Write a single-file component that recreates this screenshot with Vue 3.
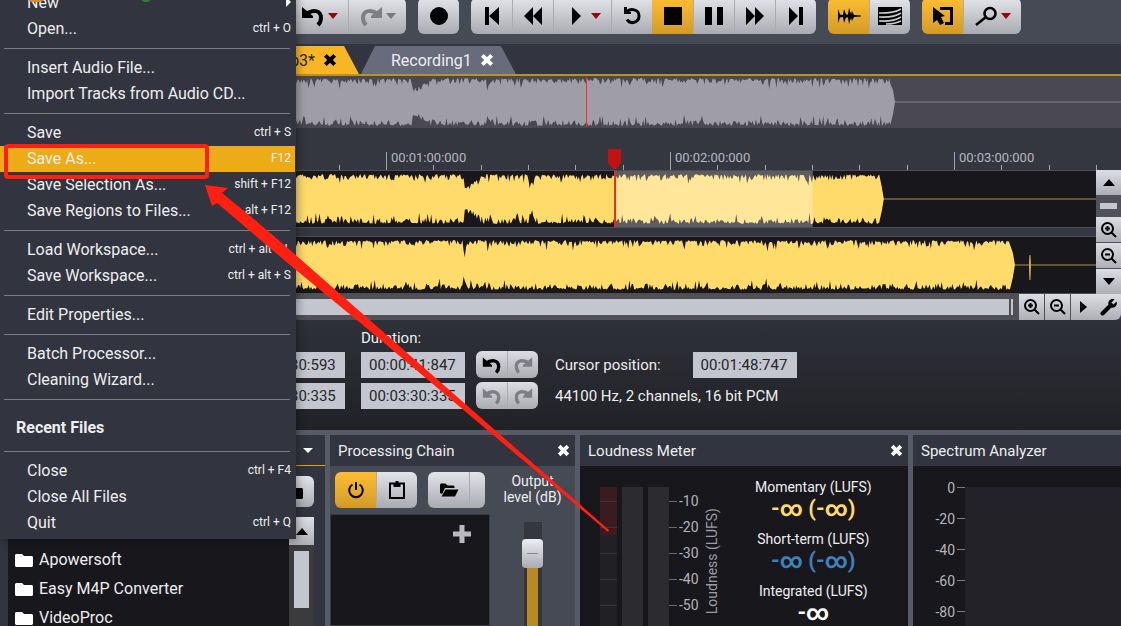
<template>
  <div class="app">
    <header class="toolbar">
      <div v-for="(group, g) in toolbar" :key="g" class="group">
        <button
          v-for="b in group"
          :key="b.name"
          type="button"
          class="tool"
          :class="{ 'tool--on': b.on, 'tool--wide': b.caret, 'tool--off': b.off }"
          :aria-label="b.name"
        >
          <svg class="icon" viewBox="0 0 24 24" width="24" height="24">
            <path v-if="icons[b.icon].fill" :d="icons[b.icon].fill" fill="currentColor" />
            <path v-if="icons[b.icon].line" :d="icons[b.icon].line" fill="none" stroke="currentColor"
              :stroke-width="icons[b.icon].w || 3" />
            <path v-if="icons[b.icon].light" :d="icons[b.icon].light" fill="none" stroke="#c9cbd0" stroke-width="1.6" />
          </svg>
          <span v-if="b.caret" class="caret" :class="{ 'caret--red': !b.off }"></span>
        </button>
      </div>
    </header>

    <div class="tabs">
      <div class="tab tab--active">
        <button type="button" class="tab__name">p3*</button>
        <button type="button" class="close" aria-label="Close tab">
          <svg viewBox="0 0 12 12" width="14" height="14"><path d="M2 2L10 10M10 2L2 10" stroke="currentColor" stroke-width="3.4" /></svg>
        </button>
      </div>
      <div class="tab">
        <button type="button" class="tab__name">Recording1</button>
        <button type="button" class="close" aria-label="Close tab">
          <svg viewBox="0 0 12 12" width="14" height="14"><path d="M2 2L10 10M10 2L2 10" stroke="currentColor" stroke-width="3.4" /></svg>
        </button>
      </div>
    </div>

    <svg class="overview" viewBox="0 0 1121 52" preserveAspectRatio="none">
      <path d="M890 26H1121" stroke="#66656e" stroke-width="2" />
      <path :d="overviewWave" fill="#9f9ea7" />
      <path d="M586.5 1V51" stroke="#ff2a2a" stroke-width="1" />
    </svg>

    <div class="editor">
      <div class="ruler">
        <div v-for="t in rulerMarks" :key="t" class="ruler__minute">
          <span class="ruler__major">{{ t }}</span>
          <i v-for="n in 5" :key="n" class="ruler__minor"></i>
        </div>
        <svg class="playhead" viewBox="0 0 13 21" width="13" height="21">
          <path d="M0 0H13V14L8 20H5L0 14Z" fill="#c41112" />
        </svg>
      </div>

      <div class="tracks">
        <svg class="track" viewBox="0 0 1095 56" preserveAspectRatio="none">
          <path d="M880 28H1095" stroke="#a88f4a" stroke-width="1" />
          <path :d="firstWave" fill="#ffdb6c" />
          <rect x="615" y="0" width="197" height="56" fill="#fff" opacity="0.3" />
          <path d="M614.5 0V56" stroke="#e22f1c" stroke-width="2" />
        </svg>
        <svg class="track" viewBox="0 0 1095 56" preserveAspectRatio="none">
          <path d="M1012 28H1095" stroke="#a88f4a" stroke-width="1" />
          <path :d="secondWave" fill="#ffdb6c" />
          <path d="M1029 18L1029.500 28L1029 43L1028.500 28Z" fill="#ffdb6c" stroke="#c9ad58" stroke-width="1" />
        </svg>
      </div>

      <div class="vscroll">
        <button type="button" class="mini" aria-label="Scroll up"><span class="up"></span></button>
        <div class="vscroll__track"></div>
        <button type="button" class="mini" aria-label="Zoom in vertically">
          <svg viewBox="0 0 18 18" width="18" height="18"><path :d="magnifier + 'M5 7.500H10M7.500 5V10'" class="stroke" /></svg>
        </button>
        <button type="button" class="mini" aria-label="Zoom out vertically">
          <svg viewBox="0 0 18 18" width="18" height="18"><path :d="magnifier + 'M5 7.500H10'" class="stroke" /></svg>
        </button>
        <button type="button" class="mini" aria-label="Scroll down"><span class="up up--down"></span></button>
      </div>

      <div class="hscroll">
        <div class="hscroll__track"><div class="hscroll__thumb"></div><div class="hscroll__grip"></div></div>
        <button type="button" class="mini" aria-label="Zoom in">
          <svg viewBox="0 0 18 18" width="18" height="18"><path :d="magnifier + 'M5 7.500H10M7.500 5V10'" class="stroke" /></svg>
        </button>
        <button type="button" class="mini" aria-label="Zoom out">
          <svg viewBox="0 0 18 18" width="18" height="18"><path :d="magnifier + 'M5 7.500H10'" class="stroke" /></svg>
        </button>
        <button type="button" class="mini" aria-label="Scroll right"><span class="right"></span></button>
      </div>
      <button type="button" class="mini mini--corner" aria-label="View settings">
        <svg viewBox="0 0 18 18" width="18" height="18">
          <path d="M2.500 15.500L9.500 8.500" stroke="currentColor" stroke-width="4" stroke-linecap="round" />
          <path d="M14.500 1.500L11.500 4.500L13.500 6.500L16.500 3.500C18 7 15 10.500 11 9.500L8.500 7C7.500 3 11 0 14.500 1.500Z" fill="currentColor" />
        </svg>
      </button>
    </div>

    <section class="info">
      <label for="duration" class="info__label">Duration:</label>
      <input class="time info__end" value="00:02:30:593" aria-label="Selection end" />
      <input id="duration" class="time" value="00:00:41:847" />
      <div class="history">
        <button type="button" class="history__btn" aria-label="Undo selection">
          <svg viewBox="0 0 24 24" width="20" height="20"><path :d="icons.undo.fill" fill="currentColor" /><path :d="icons.undo.line" fill="none" stroke="currentColor" stroke-width="4" /></svg>
        </button>
        <button type="button" class="history__btn history__btn--off" aria-label="Redo selection">
          <svg viewBox="0 0 24 24" width="20" height="20"><path :d="icons.redo.fill" fill="currentColor" /><path :d="icons.redo.line" fill="none" stroke="currentColor" stroke-width="4" /></svg>
        </button>
      </div>
      <div class="cursor">
        <label for="cursor">Cursor position:</label>
        <input id="cursor" class="time" value="00:01:48:747" />
      </div>
      <input class="time info__end" value="00:03:30:335" aria-label="View end" />
      <input class="time" value="00:03:30:335" aria-label="View duration" />
      <div class="history">
        <button type="button" class="history__btn history__btn--off" aria-label="Undo view">
          <svg viewBox="0 0 24 24" width="20" height="20"><path :d="icons.undo.fill" fill="currentColor" /><path :d="icons.undo.line" fill="none" stroke="currentColor" stroke-width="4" /></svg>
        </button>
        <button type="button" class="history__btn history__btn--off" aria-label="Redo view">
          <svg viewBox="0 0 24 24" width="20" height="20"><path :d="icons.redo.fill" fill="currentColor" /><path :d="icons.redo.line" fill="none" stroke="currentColor" stroke-width="4" /></svg>
        </button>
      </div>
      <p class="format">44100 Hz, 2 channels, 16 bit PCM</p>
    </section>

    <main class="dock">
      <section class="panel panel--files">
        <div class="panel__head panel__head--gold">
          <button type="button" class="close" aria-label="Panel menu"><span class="up up--down up--white"></span></button>
        </div>
        <div class="files__bar">
          <button type="button" class="tool tool--solo" aria-label="Folder">
            <svg viewBox="0 0 18 14" width="18" height="14"><path :d="folder" fill="#000" /></svg>
          </button>
        </div>
        <div class="files">
          <ul class="files__list">
            <li v-for="f in folders" :key="f">
              <svg viewBox="0 0 18 14" width="18" height="14"><path :d="folder" fill="#fff" /></svg>
              {{ f }}
            </li>
          </ul>
          <div class="files__scroll">
            <button type="button" class="mini mini--tall" aria-label="Scroll list up"><span class="up"></span></button>
            <div class="files__thumb"></div>
          </div>
        </div>
      </section>

      <section class="panel">
        <div class="panel__head">
          <h2>Processing Chain</h2>
          <button type="button" class="close" aria-label="Close Processing Chain">
            <svg viewBox="0 0 12 12" width="13" height="13"><path d="M2 2L10 10M10 2L2 10" stroke="currentColor" stroke-width="3.4" /></svg>
          </button>
        </div>
        <div class="chain">
          <div class="chain__left">
            <div class="chain__tools">
              <div class="group">
                <button type="button" class="tool tool--on" aria-label="Power">
                  <svg viewBox="0 0 18 18" width="18" height="18"><path d="M5.500 3.500A6.800 6.800 0 1 0 12.500 3.500M9 1V9" class="stroke" /></svg>
                </button>
                <button type="button" class="tool" aria-label="Clipboard">
                  <svg viewBox="0 0 18 20" width="18" height="20"><path d="M2 3.500H16V18H2Z" class="stroke" /><path d="M5.500 3H7.500V1H10.500V3H12.500V7H5.500Z" fill="#000" /></svg>
                </button>
              </div>
              <div class="group">
                <button type="button" class="tool" aria-label="Open preset">
                  <svg viewBox="0 0 20 16" width="20" height="16"><path d="M1 11V2.500L2 1.500H6.500L8.500 3.500H14.500L15.500 4.500V6H6L3 12ZM6.500 7.500H19.500L16 14.500H2.500Z" fill="#000" /></svg>
                </button>
                <button type="button" class="tool tool--slim" aria-label="Preset list"></button>
              </div>
            </div>
            <div class="chain__list">
              <button type="button" class="plus" aria-label="Add effect">
                <svg viewBox="0 0 18 18" width="18" height="18"><path d="M9 0V18M0 9H18" stroke="#b8bac0" stroke-width="5" /></svg>
              </button>
            </div>
          </div>
          <div class="chain__level">
            <label for="level">Output<br />level (dB)</label>
            <input id="level" v-model="level" type="range" min="0" max="100" class="slider" />
          </div>
        </div>
      </section>

      <section class="panel">
        <div class="panel__head">
          <h2>Loudness Meter</h2>
          <button type="button" class="close" aria-label="Close Loudness Meter">
            <svg viewBox="0 0 12 12" width="13" height="13"><path d="M2 2L10 10M10 2L2 10" stroke="currentColor" stroke-width="3.4" /></svg>
          </button>
        </div>
        <div class="meter">
          <div class="meter__bar meter__bar--scale"></div>
          <div class="meter__bar"></div>
          <div class="meter__bar"></div>
          <ol class="meter__scale">
            <li v-for="n in 5" :key="n">{{ -10 * n }}</li>
          </ol>
          <div class="meter__title">Loudness (LUFS)</div>
          <dl class="readout">
            <div v-for="r in readouts" :key="r.label">
              <dt>{{ r.label }}</dt>
              <dd :class="'readout--' + r.tone">{{ r.value }}</dd>
            </div>
          </dl>
        </div>
      </section>

      <section class="panel">
        <div class="panel__head"><h2>Spectrum Analyzer</h2></div>
        <div class="spectrum">
          <ol class="spectrum__scale">
            <li v-for="n in 5" :key="n">{{ n === 1 ? '0' : -20 * (n - 1) }}</li>
          </ol>
          <div class="spectrum__plot"></div>
        </div>
      </section>
    </main>

    <nav class="menu">
      <template v-for="(m, i) in menu" :key="i">
        <hr v-if="m === '-'" class="menu__sep" />
        <div v-else-if="m.title" class="menu__title">{{ m.title }}</div>
        <button v-else type="button" class="menu__item" :class="{ 'menu__item--active': m.active }">
          <span>{{ m.name }}</span>
          <kbd v-if="m.key">{{ m.key }}</kbd>
          <span v-if="m.sub" class="right right--white"></span>
        </button>
      </template>
    </nav>

    <div class="mark"></div>
    <svg class="arrow" viewBox="0 0 620 540" width="620" height="540">
      <ellipse cx="36" cy="0" rx="7" ry="2" fill="#d98a2b" />
      <ellipse cx="146" cy="0" rx="4" ry="2" fill="#2f7d32" />
      <path d="M205 185L228 188L222 193L255 220L290 250L381 330L609 530L608 532L370 331L290 265L217 203L212 206Z" fill="#ff2012" />
    </svg>
  </div>
</template>

<script setup>
import { ref } from 'vue'

const level = ref(87)

const menu = [
  { name: 'New', sub: true },
  { name: 'Open...', key: 'ctrl + O' },
  '-',
  { name: 'Insert Audio File...' },
  { name: 'Import Tracks from Audio CD...' },
  '-',
  { name: 'Save', key: 'ctrl + S' },
  { name: 'Save As...', key: 'F12', active: true },
  { name: 'Save Selection As...', key: 'shift + F12' },
  { name: 'Save Regions to Files...', key: 'alt + F12' },
  '-',
  { name: 'Load Workspace...', key: 'ctrl + alt + L' },
  { name: 'Save Workspace...', key: 'ctrl + alt + S' },
  '-',
  { name: 'Edit Properties...' },
  '-',
  { name: 'Batch Processor...' },
  { name: 'Cleaning Wizard...' },
  '-',
  { title: 'Recent Files' },
  '-',
  { name: 'Close', key: 'ctrl + F4' },
  { name: 'Close All Files' },
  { name: 'Quit', key: 'ctrl + Q' },
]

const icons = {
  undo: { fill: 'M1 3L12 12V14H1Z', line: 'M5 10C11 5 20 6 20 14C20 17 19 19 17 21', w: 4 },
  redo: { fill: 'M23 3L12 12V14H23Z', line: 'M19 10C13 5 4 6 4 14C4 17 5 19 7 21', w: 4 },
  record: { fill: 'M12 3A9 9 0 1 1 12 21A9 9 0 1 1 12 3Z' },
  start: { fill: 'M5 3H9V21H5ZM19 3V21L9 12Z' },
  rewind: { fill: 'M12 3V21L3 12ZM21 3V21L12 12Z' },
  play: { fill: 'M8 3L17 12L8 21Z' },
  loop: { fill: 'M4 3V10H11V8H7V3Z', line: 'M7 8C10 4 19 5 19 12A6.500 6.500 0 0 1 7 15.500' },
  stop: { fill: 'M3 3H21V21H3Z' },
  pause: { fill: 'M3 3H10V21H3ZM15 3H21V21H15Z' },
  forward: { fill: 'M3 3L12 12L3 21ZM12 3L21 12L12 21Z' },
  end: { fill: 'M5 3L14 12L5 21ZM15 3H19V21H15Z' },
  wave: { fill: 'M1 5L3 10.500L6 11L7 5L9 10.500H11L12 4L14 10L15 7L17 11L24 11.500V12.500L17 13L15 17L14 14L12 20L11 13.500H9L7 19L6 13L3 13.500L1 19Z' },
  spectral: { fill: 'M0 3H24V21H0Z', light: 'M1 9C9 9 17 9 23 5M1 13C9 13.500 17 13 23 9M1 17C9 17.500 17 17 23 13M8 20C14 20 19 19 23 17' },
  select: { fill: 'M2 3L14 12L10 13L13 19L9 21L6 16L2 19Z', line: 'M9 4.500H20.500V19.500H14' },
  zoom: { line: 'M16 4A5.500 5.500 0 1 1 16 15A5.500 5.500 0 1 1 16 4ZM12 13L2 21', w: 2.6 },
}

const toolbar = [
  [
    { name: 'Undo', icon: 'undo', caret: true },
    { name: 'Redo', icon: 'redo', caret: true, off: true },
  ],
  [{ name: 'Record', icon: 'record' }],
  [
    { name: 'Go to start', icon: 'start' },
    { name: 'Rewind', icon: 'rewind' },
    { name: 'Play', icon: 'play', caret: true },
    { name: 'Loop', icon: 'loop' },
    { name: 'Stop', icon: 'stop', on: true },
    { name: 'Pause', icon: 'pause' },
    { name: 'Fast forward', icon: 'forward' },
    { name: 'Go to end', icon: 'end' },
  ],
  [
    { name: 'Waveform view', icon: 'wave', on: true },
    { name: 'Spectral view', icon: 'spectral' },
  ],
  [
    { name: 'Selection tool', icon: 'select', on: true },
    { name: 'Zoom tool', icon: 'zoom', caret: true },
  ],
]

const magnifier = 'M7.500 2A5.500 5.500 0 1 1 7.500 13A5.500 5.500 0 1 1 7.500 2ZM11.500 11.500L16 16'
const folder = 'M1 1H7L9 3H17L18 4V13L17 14H1L0 13V2Z'

const rulerMarks = ['00:00:00:000', '00:01:00:000', '00:02:00:000', '00:03:00:000']
const folders = ['Apowersoft', 'Easy M4P Converter', 'VideoProc']

const readouts = [
  { label: 'Momentary (LUFS)', value: '-∞ (-∞)', tone: 'yellow' },
  { label: 'Short-term (LUFS)', value: '-∞ (-∞)', tone: 'blue' },
  { label: 'Integrated (LUFS)', value: '-∞', tone: 'white' },
]

// outline of a loud, compressed recording; dips are [x, width, depth]
function wave(seed, end, mid, amp, dips) {
  let s = seed
  const rnd = () => {
    s = (s * 16807) % 2147483647
    return s / 2147483647
  }
  const edge = (x) => {
    let h = amp - rnd() * 2
    const r = rnd()
    if (r > 0.93) h -= 4 + rnd() * 6
    else if (r > 0.45) h -= rnd() * 5
    for (const [dx, w, depth] of dips) {
      if (x >= dx && x < dx + w) h -= depth * (1 - (x - dx) / (w * 1.3))
    }
    return h
  }
  const top = []
  const bottom = []
  for (let x = 0; x < end - 4; x += 1.2) {
    top.push(`${x.toFixed(1)} ${(mid - edge(x)).toFixed(1)}`)
    bottom.unshift(`${x.toFixed(1)} ${(mid + edge(x)).toFixed(1)}`)
  }
  return `M${top.join('L')}L${end - 2} ${mid - 12}L${end} ${mid}L${end - 2} ${mid + 12}L${bottom.join('L')}Z`
}

const overviewWave = wave(71, 895, 26, 24, [[412, 18, 10], [487, 5, 9]])
const firstWave = wave(1234, 883, 28, 25, [[464, 15, 13], [528, 7, 11]])
const secondWave = wave(987, 1014, 28, 25, [[462, 5, 12]])
</script>

<style>
body {
  background: #464a54;
}
</style>

<style scoped>
.app {
  position: relative;
  display: flex;
  flex-direction: column;
  height: 100vh;
  overflow: hidden;
  background: #343740;
  color: #eeeef0;
  font-family: Roboto, sans-serif;
  font-size: 15px;
}
button {
  padding: 0;
  border: 0;
  background: none;
  color: inherit;
  font: inherit;
}
.toolbar {
  display: flex;
  flex: none;
  align-items: flex-end;
  gap: 12px;
  height: 44px;
  box-sizing: border-box;
  padding: 0 0 10px 290px;
  background: #464a54;
}
.group {
  display: flex;
  border-radius: 6px;
  overflow: hidden;
}
.tool {
  display: flex;
  flex: none;
  align-items: center;
  justify-content: center;
  width: 41px;
  height: 36px;
  color: #000;
  background: linear-gradient(#e2e4e9, #a9abb1);
}
.tool + .tool {
  box-shadow: inset 1px 0 #a9abb0;
}
.tool--wide {
  width: 58px;
  gap: 3px;
}
.tool.tool--on {
  background: linear-gradient(#fdbd33, #d39b26);
  box-shadow: none;
}
.tool--off {
  color: #7d7f83;
}
.tool--slim {
  width: 16px;
}
.icon {
  flex: none;
}
.caret {
  border: 5px solid transparent;
  border-top: 6px solid #77797d;
  border-bottom: 0;
}
.caret--red {
  border-top-color: #9c0508;
}

.tabs {
  display: flex;
  flex: none;
  align-items: flex-end;
  gap: 2px;
  height: 32px;
  box-sizing: border-box;
  padding-left: 200px;
  border-bottom: 2px solid #bd8f28;
  background: #32353f;
}
.tab {
  display: flex;
  align-items: center;
  gap: 8px;
  height: 28px;
  padding: 0 22px 0 30px;
  background: #676b7c;
  clip-path: polygon(14px 0, calc(100% - 15px) 0, 100% 100%, 0 100%);
}
.tab__name {
  font-size: 16px;
}
.tab--active {
  width: 107px;
  justify-content: flex-end;
  background: #f9b624;
  color: #2a2312;
}
.tab--active .close {
  color: #000;
}
.close {
  display: flex;
  color: #fff;
}
.overview {
  flex: none;
  display: block;
  width: 100%;
  height: 52px;
  background: #4a4951;
}

.editor {
  flex: none;
  display: grid;
  grid-template-columns: 1fr 25px;
}
.ruler {
  position: relative;
  grid-column: 1 / 3;
  display: flex;
  height: 42px;
  padding-left: 102px;
  overflow: hidden;
}
.ruler__minute {
  flex: none;
  display: grid;
  grid-template-columns: repeat(6, minmax(0, 1fr));
  align-items: end;
  width: 284px;
}
.ruler__major {
  height: 18px;
  padding-left: 4px;
  border-left: 1px solid #a4a6ac;
  color: #b6b8be;
  font-size: 13px;
  line-height: 12px;
  white-space: nowrap;
}
.ruler__minor {
  height: 5px;
  border-left: 1px solid #a4a6ac;
}
.playhead {
  position: absolute;
  left: 608px;
  bottom: 0;
}
.tracks {
  display: flex;
  flex-direction: column;
  gap: 8px;
}
.track {
  display: block;
  width: 100%;
  height: 56px;
  border: solid #4c4c51;
  border-width: 1px 0;
  background: #18171c;
}
.vscroll {
  display: flex;
  flex-direction: column;
  gap: 1px;
  background: #515259;
}
.vscroll__track {
  flex: 1;
  margin: 7px 4px;
  background: #c3c6cf;
}
.mini {
  flex: none;
  display: flex;
  align-items: center;
  justify-content: center;
  width: 25px;
  height: 25px;
  color: #000;
  background: linear-gradient(#dcdee3, #adafb5);
}
.mini--corner {
  height: 26px;
  border-bottom-right-radius: 6px;
}
.mini--tall {
  height: 28px;
}
.stroke {
  fill: none;
  stroke: #000;
  stroke-width: 2;
}
.up {
  border: 6px solid transparent;
  border-top: 0;
  border-bottom: 7px solid #000;
}
.up--down {
  transform: rotate(180deg);
}
.up--white {
  border-width: 5px;
  border-top: 0;
  border-bottom-color: #fff;
}
.right {
  border: 6px solid transparent;
  border-left: 7px solid #000;
  border-right: 0;
}
.right--white {
  border-width: 5px;
  border-left-color: #fff;
  border-right: 0;
}
.hscroll {
  display: flex;
  gap: 1px;
  background: #515155;
}
.hscroll__track {
  flex: 1;
  display: flex;
  gap: 2px;
  padding: 5px;
}
.hscroll__thumb {
  flex: 1;
  background: #c3c6cf;
}
.hscroll__grip {
  width: 2px;
  background: #c3c6cf;
}
.hscroll .mini {
  height: 26px;
}

.info {
  flex: none;
  display: grid;
  grid-template-columns: 345px 104px 62px 1fr;
  grid-template-rows: 18px 27px 27px;
  align-items: center;
  column-gap: 16px;
  row-gap: 4px;
  padding: 9px 0 21px;
  background: linear-gradient(#2e3138, #212226);
}
.info__label {
  grid-column: 2 / -1;
}
.time {
  width: 104px;
  height: 26px;
  box-sizing: border-box;
  padding: 0 8px;
  border: 0;
  background: #c3c6cf;
  color: #25262a;
  font: inherit;
}
.info__end {
  grid-column: 1;
  justify-self: end;
}
.history {
  display: flex;
  height: 27px;
  margin-left: -5px;
  margin-right: 5px;
  border-radius: 6px;
  overflow: hidden;
}
.history__btn {
  flex: 1;
  display: flex;
  align-items: center;
  justify-content: center;
  color: #000;
  background: linear-gradient(#dcdee3, #aaacb2);
}
.history__btn + .history__btn {
  box-shadow: inset 1px 0 #a9abb0;
}
.history__btn--off {
  color: #7d7f83;
}
.cursor {
  display: flex;
  align-items: center;
  gap: 32px;
  margin-left: -4px;
}
.format {
  margin: 0 0 0 -4px;
}

.dock {
  flex: 1;
  display: grid;
  grid-template-columns: 325fr 245fr 328fr 208fr;
  gap: 5px;
  min-height: 0;
  padding-top: 5px;
  background: #575b67;
}
.panel {
  display: flex;
  flex-direction: column;
  min-width: 0;
  min-height: 0;
  overflow: hidden;
  background: #18171c;
}
.panel__head {
  flex: none;
  display: flex;
  align-items: center;
  justify-content: space-between;
  height: 31px;
  box-sizing: border-box;
  padding: 0 5px 0 8px;
  background: #32353f;
}
.panel__head h2 {
  margin: 0;
  font-size: 15px;
  font-weight: 400;
}
.panel__head--gold {
  justify-content: flex-end;
  padding-right: 12px;
  border-bottom: 1px solid #dda11f;
}
.panel--files {
  background: #32353f;
}
.files__bar {
  flex: none;
  display: flex;
  justify-content: flex-end;
  padding: 10px 11px;
}
.tool--solo {
  height: 31px;
  border-radius: 6px;
}
.files {
  flex: 1;
  display: flex;
  min-height: 0;
  padding: 0 11px 0 8px;
}
.files__list {
  flex: 1;
  margin: 0;
  padding: 28px 0 0;
  list-style: none;
  background: #18171c;
  font-size: 16px;
}
.files__list li {
  display: flex;
  align-items: center;
  gap: 6px;
  height: 29px;
  padding-left: 7px;
}
.files__scroll {
  display: flex;
  flex-direction: column;
  gap: 6px;
  background: #3b3a3d;
}
.files__thumb {
  height: 57px;
  margin: 0 5px;
  background: #c3c6cf;
}

.chain {
  flex: 1;
  display: flex;
  min-height: 0;
  background: #464a54;
}
.chain__left {
  display: flex;
  flex-direction: column;
  width: 160px;
}
.chain__tools {
  display: flex;
  gap: 11px;
  padding: 6px 0 6px 5px;
}
.chain__list {
  flex: 1;
  padding: 10px 18px;
  border: 1px solid #38393e;
  background: #18171c;
  text-align: right;
}
.chain__level {
  flex: 1;
  display: flex;
  flex-direction: column;
  align-items: center;
  gap: 17px;
  padding-top: 7px;
  font-size: 14px;
  line-height: 16px;
  text-align: center;
}
.slider {
  flex: none;
  width: 21px;
  height: 160px;
  margin: 0;
  appearance: none;
  writing-mode: vertical-lr;
  direction: rtl;
  background:
    linear-gradient(#b98a24, #b98a24) center 40px / 11px 100% no-repeat,
    linear-gradient(#343740, #343740) center / 18px 100% no-repeat;
}
.slider::-webkit-slider-thumb {
  appearance: none;
  width: 21px;
  height: 29px;
  border-radius: 4px;
  background:
    linear-gradient(#85878c, #85878c) center / 11px 1px no-repeat,
    linear-gradient(#eceef2, #a9abb0);
}

.meter {
  flex: 1;
  display: flex;
  min-height: 0;
  padding: 21px 3px 0 20px;
}
.meter__bar {
  flex: none;
  width: 21px;
  margin-right: 5px;
  background: #2c2b30;
}
.meter__bar--scale {
  width: 17px;
  background:
    repeating-linear-gradient(transparent 0 14px, #37363b 14px 15px, transparent 15px 26px),
    linear-gradient(#3a1b20 48px, #212025 48px);
}
.meter__scale {
  flex: none;
  margin: 1px 0 0 -5px;
  padding: 0;
  list-style: none;
  color: #b4b5ba;
  font-size: 14px;
}
.meter__scale li,
.spectrum__scale li {
  display: flex;
  align-items: center;
}
.meter__scale li {
  gap: 2px;
  height: 26px;
}
.meter__scale li::before {
  content: '';
  width: 8px;
  height: 1px;
  background: #6a6a70;
}
.meter__title {
  align-self: flex-start;
  margin: 21px 0 0 3px;
  color: #9c9ca2;
  font-size: 14px;
  line-height: 20px;
  writing-mode: vertical-rl;
  transform: rotate(180deg);
}
.readout {
  flex: 1;
  margin: -10px 0 0;
  text-align: center;
  white-space: nowrap;
}
.readout div {
  height: 52px;
}
.readout dt {
  font-size: 14px;
  line-height: 20px;
}
.readout dd {
  margin: 0;
  font-size: 22px;
  font-weight: 700;
  line-height: 24px;
}
.readout--yellow {
  color: #ffdb6c;
}
.readout--blue {
  color: #3d82bd;
}
.readout--white {
  color: #fff;
}
.spectrum {
  flex: 1;
  display: flex;
  min-height: 0;
  padding-top: 6px;
}
.spectrum__scale {
  width: 52px;
  margin: 0;
  padding: 0;
  list-style: none;
  color: #b4b5ba;
  font-size: 14px;
}
.spectrum__scale li {
  justify-content: flex-end;
  gap: 2px;
  height: 31px;
}
.spectrum__scale li::after {
  content: '';
  width: 8px;
  height: 1px;
  background: #7c7c82;
}
.spectrum__plot {
  flex: 1;
  margin-top: 15px;
  background: #232228;
}

.menu {
  position: absolute;
  top: -10px;
  left: 0;
  width: 296px;
  padding-bottom: 3px;
  background: #32353f;
  box-shadow: 2px 2px 8px rgba(0, 0, 0, 0.35);
}
.menu__item {
  display: flex;
  align-items: center;
  justify-content: space-between;
  width: 295px;
  height: 26px;
  padding: 0 4px 2px 27px;
  font-size: 16px;
}
.menu__item--active {
  background: #eeab18;
}
.menu__item kbd {
  font-family: inherit;
  font-size: 12px;
}
.menu__sep {
  height: 1px;
  margin: 6px 6px 6px 4px;
  border: 0;
  background: #7b7d84;
}
.menu__title {
  padding: 5px 0 0 16px;
  font-weight: 700;
  font-size: 16px;
  line-height: 34px;
}
.mark {
  position: absolute;
  top: 144px;
  left: 4px;
  width: 197px;
  height: 27px;
  border: 4px solid #ff2012;
  border-radius: 4px;
}
.arrow {
  position: absolute;
  top: 0;
  left: 0;
  pointer-events: none;
}
</style>
